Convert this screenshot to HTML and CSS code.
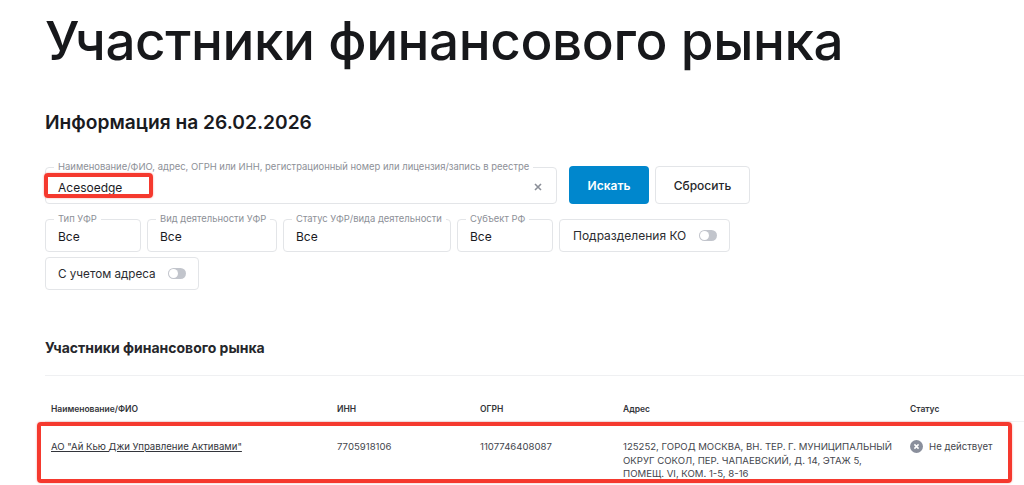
FILE: index.html
```html
<!DOCTYPE html>
<html lang="ru">
<head>
<meta charset="utf-8">
<title>Участники финансового рынка</title>
<link rel="stylesheet" href="styles.css">
</head>
<body>
<main class="page">
  <h1 class="title">Участники финансового рынка</h1>
  <h2 class="info">Информация на 26.02.2026</h2>
  <form class="filters">
    <div class="search-row">
      <div class="field field-search">
        <span class="legend">Наименование/ФИО, адрес, ОГРН или ИНН, регистрационный номер или лицензия/запись в реестре</span>
        <span class="value">Acesoedge</span>
        <svg class="clear" width="8" height="8" viewBox="0 0 8 8"><path d="M1 1l6 6M7 1L1 7" stroke="#8b8f98" stroke-width="1.6"/></svg>
      </div>
      <button class="btn btn-primary" type="button">Искать</button>
      <button class="btn btn-secondary" type="button">Сбросить</button>
    </div>
    <div class="select-row">
      <div class="field w-type"><span class="legend">Тип УФР</span><span class="value">Все</span></div>
      <div class="field w-kind"><span class="legend">Вид деятельности УФР</span><span class="value">Все</span></div>
      <div class="field w-status"><span class="legend">Статус УФР/вида деятельности</span><span class="value">Все</span></div>
      <div class="field w-region"><span class="legend">Субъект РФ</span><span class="value">Все</span></div>
      <div class="toggle-box w-ko">Подразделения КО<span class="toggle"></span></div>
      <div class="toggle-box w-addr">С учетом адреса<span class="toggle"></span></div>
    </div>
  </form>
  <h3 class="section">Участники финансового рынка</h3>
  <div class="table">
    <div class="thead">
      <span>Наименование/ФИО</span><span>ИНН</span><span>ОГРН</span><span>Адрес</span><span>Статус</span>
    </div>
    <div class="trow">
      <a class="name" href="#">АО "Ай Кью Джи Управление Активами"</a>
      <span>7705918106</span>
      <span>1107746408087</span>
      <span class="addr">125252, ГОРОД МОСКВА, ВН. ТЕР. Г. МУНИЦИПАЛЬНЫЙ ОКРУГ СОКОЛ, ПЕР. ЧАПАЕВСКИЙ, Д. 14, ЭТАЖ 5, ПОМЕЩ. VI, КОМ. 1-5, 8-16</span>
      <span class="status">
        <svg width="13" height="13" viewBox="0 0 13 13"><circle cx="6.5" cy="6.5" r="6.5" fill="#8a8f9c"/><path d="M4.4 4.4l4.2 4.2M8.6 4.4L4.4 8.6" stroke="#fff" stroke-width="1.5"/></svg>
        Не действует
      </span>
    </div>
  </div>
</main>
<div class="mark mark-input"></div>
<div class="mark mark-row"></div>
</body>
</html>
```
FILE: styles.css
```css
* { box-sizing: border-box; }
html, body { margin: 0; height: 485px; overflow: hidden; background: #fff; }
body { font-family: Inter, "Noto Sans", sans-serif; color: #1a1b1f; }
.page { padding-left: 45px; }
.title { margin: 0; padding-top: 7px; font-size: 53px; line-height: 68px; font-weight: 530; letter-spacing: -0.4px; color: #17181b; white-space: nowrap; }
.info { margin: 32px 0 0; font-size: 19.2px; line-height: 30px; font-weight: 600; color: #1a1b1f; }
.filters { margin-top: 29px; display: flex; flex-direction: column; gap: 15px; }
.search-row { display: flex; gap: 6px; align-items: flex-start; }
.select-row { display: flex; flex-wrap: wrap; gap: 5px 6px; width: 700px; }
.field { position: relative; height: 33px; border: 1px solid #e3e5e8; border-radius: 4px; display: flex; align-items: center; padding: 0 12px; font-size: 12px; }
.field-search { width: 512px; height: 37px; margin-right: 6px; margin-top: 1px; }
.legend { position: absolute; left: 8px; top: -7px; padding: 0 4px; background: #fff; font-size: 9.45px; line-height: 12px; color: #8d9097; white-space: nowrap; }
.value { padding-top: 2px; font-size: 12px; color: #1a1b1f; }
.field-search .value { padding-top: 3px; }
.clear { position: absolute; right: 14px; top: 15px; }
.w-type { width: 96px; }
.w-kind { width: 130px; }
.w-status { width: 168px; }
.w-region { width: 96px; }
.btn { height: 38px; border-radius: 4px; font: 500 12px Inter, sans-serif; }
.btn-primary { width: 80px; border: 0; background: #0087cd; color: #fff; font-weight: 600; }
.btn-secondary { width: 95px; background: #fff; border: 1px solid #e3e5e8; color: #26272b; }
.toggle-box { height: 33px; padding: 0 12px 0 13px; border: 1px solid #e3e5e8; border-radius: 4px; display: flex; align-items: center; justify-content: space-between; font-size: 12px; color: #2b2c30; white-space: nowrap; }
.w-ko { width: 171px; }
.w-addr { width: 154px; padding-left: 12px; font-size: 11.7px; }
.toggle { position: relative; width: 18px; height: 11px; border-radius: 6px; background: #c2c5cc; }
.toggle::before { content: ""; position: absolute; left: 1px; top: 1px; width: 9px; height: 9px; border-radius: 50%; background: #fff; }
.section { margin: 48px 0 0; font-size: 14px; line-height: 20px; font-weight: 700; color: #26272b; }
.table { margin-top: 17px; border-top: 1px solid #eff0f2; }
.thead, .trow { display: grid; grid-template-columns: 286px 143px 143px 287px 1fr; padding-left: 6px; }
.thead { padding-top: 27px; height: 46px; font-size: 8.5px; line-height: 12px; font-weight: 600; color: #33343a; border-bottom: 1px solid #f1f2f4; }
.trow { padding-top: 18px; font-size: 9.6px; line-height: 13.5px; color: #44464d; }
.name { color: #33353b; text-decoration: underline; white-space: nowrap; }
.addr { width: 278px; }
.status { display: flex; align-items: flex-start; gap: 6px; white-space: nowrap; }
.mark { position: absolute; border: 4px solid #f5392e; border-radius: 4px; box-shadow: 0 0 2px rgba(245, 57, 46, 0.5); }
.mark-input { left: 44px; top: 173px; width: 109px; height: 25px; }
.mark-row { left: 37px; top: 422px; width: 975px; height: 61px; }
```
